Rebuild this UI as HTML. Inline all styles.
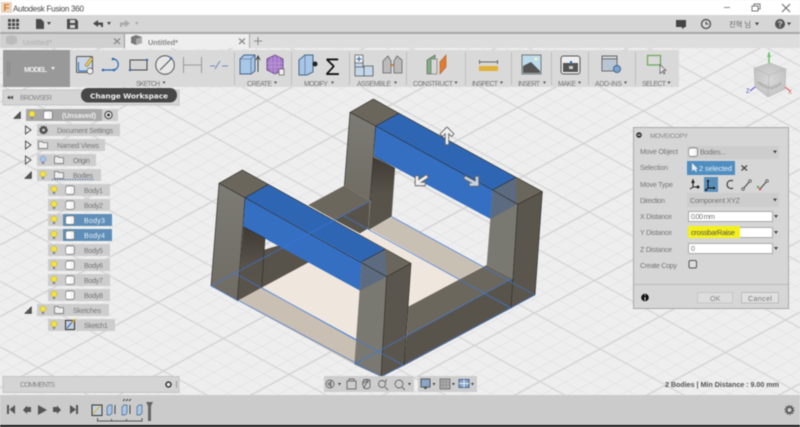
<!DOCTYPE html>
<html><head><meta charset="utf-8"><style>
html,body{margin:0;padding:0;width:800px;height:427px;overflow:hidden;background:#eeeeee}
svg{display:block;position:absolute;left:0;top:0;filter:blur(.4px)}
text{font-family:"Liberation Sans","Noto Sans CJK KR",sans-serif;font-size:7.1px;fill:#777}
.r{fill:#cdcdcd}
.m{fill:#777;font-size:6.9px}
.d{fill:#777;font-size:7.2px}
</style></head><body>
<svg width="800" height="427" viewBox="0 0 800 427" xmlns="http://www.w3.org/2000/svg">
<defs>
<pattern id="grid" width="100" height="100" patternUnits="userSpaceOnUse" patternTransform="matrix(.6 -.325 .655 .36 600 349)">
<path d="M20 0V100M40 0V100M60 0V100M80 0V100M0 20H100M0 40H100M0 60H100M0 80H100" stroke="#e3e3e3" stroke-width="1.200" fill="none"/>
<path d="M0 0H100M0 100H100M0 0V100M100 0V100" stroke="#d4d4d4" stroke-width="2.200" fill="none"/>
</pattern>
<linearGradient id="post" x1="0" x2="0" y1="0" y2="1"><stop offset="0" stop-color="#7c7b75"/><stop offset="1" stop-color="#706c63"/></linearGradient>
<linearGradient id="inner" x1="0" x2="0" y1="0" y2="1"><stop offset="0" stop-color="#3f3b34"/><stop offset=".5" stop-color="#57524a"/><stop offset="1" stop-color="#5a554c"/></linearGradient>
<radialGradient id="cube"><stop offset="0" stop-color="#d8d8d8"/><stop offset="1" stop-color="#c4c4c4"/></radialGradient>
<g id="bulb"><circle cx="0" cy="-1" r="3" fill="#f3e23f" stroke="#b8a93a" stroke-width=".5"/><rect x="-1.200" y="1.800" width="2.400" height="2.200" fill="#888"/></g>
<g id="bulbb"><circle cx="0" cy="-1" r="3" fill="#a9c3ea" stroke="#6d8ab8" stroke-width=".5"/><rect x="-1.200" y="1.800" width="2.400" height="2.200" fill="#888"/></g>
<g id="body"><rect x="-4.200" y="-4.200" width="8.600" height="8.600" rx="2" fill="#f2f2f2" stroke="#777" stroke-width=".8"/><rect x="-4" y="-2.500" width="4.600" height="6" fill="#fff"/></g>
<path id="folder" d="M-4.500 -3.500H-1L0 -2.300H4.500V3.500H-4.500Z" fill="#eee" stroke="#666" stroke-width=".7"/>
<path id="tri" d="M-2.500 -4L3 0L-2.500 4Z" fill="#eee" stroke="#444" stroke-width=".9"/>
<path id="tri2" d="M3.500 -3.500V3.500H-3.500Z" fill="#555" stroke="#333" stroke-width=".5"/>
</defs>

<!-- viewport -->
<rect width="800" height="427" fill="#eeeeee"/>
<rect width="800" height="427" fill="url(#grid)"/>

<!-- model -->
<g transform="translate(200 95) scale(.33333)">
<polygon points="185,578 505,405 575,365 850,515 625,635 620,735 468,735" fill="#efe7dd"/>
<polygon points="115,618 185,578 468,735 463,808" fill="#c9bfb2"/>
<polygon points="510,402 578,366 848,514 778,553" fill="#c9c0b4"/>
<polygon points="325,330 433,272 510,318 405,375" fill="#6c675d"/>
<polygon points="405,375 510,318 505,400 480,415" fill="#58534a"/>
<polygon points="190,465 240,450 330,500 185,578" fill="#57524a"/>
<polygon points="130,395 195,430 185,578 112,618" fill="url(#inner)"/>
<polygon points="520,185 585,220 575,365 505,405" fill="url(#inner)"/>
<polygon points="625,635 860,510 938,550 620,720" fill="#6c675c"/>
<polygon points="620,720 938,550 933,640 612,812" fill="#59544b"/>
<!-- back post -->
<polygon points="450,52 527,93 510,318 433,272" fill="url(#post)"/>
<polygon points="450,52 520,12 597,55 527,93" fill="#6b665c"/>
<polygon points="527,93 597,55 948,247 878,285" fill="#2f66b4"/>
<polygon points="527,93 878,285 872,372 522,183" fill="#346fc2"/>
<polygon points="878,285 953,328 938,550 860,510" fill="#7a7971"/>
<polygon points="953,328 1027,290 1005,600 933,640" fill="#5b564d"/>
<polygon points="878,285 948,247 1027,290 953,328" fill="#6b665c"/>
<polygon points="878,285 948,247 950,328 872,372" fill="#5c6b80"/>
<polyline points="527,93 878,285 953,328 1027,290 948,247 597,55 520,12 450,52 527,93 597,55" fill="none" stroke="#2f2d2a" stroke-width="2"/>
<path d="M878 285L948 247M953 328L933 640M1027 290L1005 600M527 93L510 318M450 52L433 272M522 183L585 220" stroke="#2f2d2a" stroke-width="2" fill="none"/>
<!-- front post -->
<polygon points="57,265 135,308 112,618 33,573" fill="url(#post)"/>
<polygon points="57,265 127,225 205,268 135,308" fill="#6b665c"/>
<polygon points="135,308 205,268 555,463 485,500" fill="#2f66b4"/>
<polygon points="135,308 485,500 480,587 130,395" fill="#346fc2"/>
<polygon points="485,500 560,545 543,845 463,808" fill="#7a7971"/>
<polygon points="560,545 633,505 612,812 543,845" fill="#5b564d"/>
<polygon points="485,500 555,463 633,505 560,545" fill="#6b665c"/>
<polygon points="485,500 555,463 560,545 480,587" fill="#5c6b80"/>
<path d="M57 265L127 225L633 505L560 545L135 308L57 265L33 573M135 308L112 618M205 268L135 308M555 463L485 500M560 545L543 845M633 505L612 812M130 395L195 430M195 430L185 578" stroke="#2f2d2a" stroke-width="2" fill="none"/>
<!-- blue sketch lines -->
<path d="M33 573L545 845L1005 600M33 573L510 318M463 808L938 550M105 535L612 812M575 365L1005 600M430 362L935 640M185 578L468 735" stroke="#3a78e0" stroke-width="2" fill="none"/>
</g>
<!-- manipulators -->
<g fill="none" stroke-linecap="square" stroke-linejoin="miter">
<g stroke="#666" stroke-width="4.400"><path d="M447 143V130M442.500 134L447 129.500L451.500 134"/><path d="M426 177L417 183M417 177.500V184H423.500"/><path d="M466 178L477 184M477 178V184.500H471"/></g>
<g stroke="#f2f2f2" stroke-width="2.600"><path d="M447 143V130M442.500 134L447 129.500L451.500 134"/><path d="M426 177L417 183M417 177.500V184H423.500"/></g>
<g stroke="#c5d3e6" stroke-width="2.600"><path d="M466 178L477 184M477 178V184.500H471"/></g>
</g>

<!-- title bar -->
<rect width="800" height="15" fill="#fff"/>
<rect x="1" y="2" width="11" height="11" fill="#e8d6c4"/>
<text x="3.500" y="11" style="font-size:10px;font-weight:bold;fill:#e07a20">F</text>
<text x="13" y="11.500" textLength="71" style="font-size:8.100px;fill:#444">Autodesk Fusion 360</text>
<path d="M724 7.500H730" stroke="#888"/>
<path d="M752 6H758V11H752ZM754 6V4H760V9H758" fill="none" stroke="#777"/>
<path d="M782 4L790 12M790 4L782 12" stroke="#666"/>

<!-- top toolbar -->
<rect y="15" width="800" height="18" fill="#d6d6d6"/>
<rect y="32" width="800" height="2" fill="#a8a8a8"/>
<g fill="#4a4a4a">
<rect x="8" y="19" width="3" height="3"/><rect x="12" y="19" width="3" height="3"/><rect x="16" y="19" width="3" height="3"/>
<rect x="8" y="23" width="3" height="3"/><rect x="12" y="23" width="3" height="3"/><rect x="16" y="23" width="3" height="3"/>
<rect x="8" y="27" width="3" height="2"/><rect x="12" y="27" width="3" height="2"/><rect x="16" y="27" width="3" height="2"/>
<path d="M36 19H41L44 22V29H36Z"/><path d="M47 22H51L49 25Z"/>
<path d="M67 19H76L78 21V29H67ZM70 20V23H75V20ZM70 25V28H75V25Z" fill-rule="evenodd"/>
<path d="M93 23.500L98 20V22.500H103V27H101V25H98V27Z"/><path d="M107 22H111L109 25Z"/>
</g>
<g fill="#aaa"><path d="M130 23.500L125 20V22.500H120V27H122V25H125V27Z"/><path d="M135 22H138.500L136.800 25Z"/></g>
<rect x="676" y="20" width="10" height="7" fill="#444"/><path d="M682 27V29L685 27Z" fill="#444"/>
<circle cx="706" cy="24" r="4.500" fill="none" stroke="#444" stroke-width="1.200"/><path d="M706 21.500V24H708.500" fill="none" stroke="#444" stroke-width="1"/>
<text x="729" y="27" textLength="22" style="font-size:7.400px;fill:#666">진혁 님</text>
<path d="M755 22.500H759L757 25.500Z" fill="#444"/>
<circle cx="780" cy="24" r="5" fill="#555"/><text x="777.600" y="27.200" style="font-size:8px;font-weight:bold;fill:#ddd">?</text>
<path d="M787 22.500H791L789 25.500Z" fill="#444"/>

<!-- tabs -->
<rect y="34" width="800" height="14" fill="#dddddd"/>
<rect y="34" width="124" height="14" fill="#d0d0d0"/>
<rect x="125" y="34" width="124" height="14" fill="#eeeeee"/>
<rect x="124" y="34" width="1" height="14" fill="#999"/><rect x="249" y="34" width="1" height="14" fill="#aaa"/>
<path d="M6 37L11 35L17 37V43L11 45L6 43Z" fill="#bbb"/>
<path d="M131 37L136 35L142 37V43L136 45L131 43Z" fill="#777"/><path d="M136 39L142 37V43L136 45Z" fill="#aaa"/>
<text x="23" y="45" textLength="29" style="font-size:7.400px;fill:#aaa">Untitled*</text>
<text x="148" y="45" textLength="30" style="font-size:7.400px;font-weight:bold;fill:#888">Untitled*</text>
<path d="M114 38.500L120 44M120 38.500L114 44" stroke="#888" stroke-width="1.200"/>
<path d="M239 38.500L245 44M245 38.500L239 44" stroke="#888" stroke-width="1.200"/>
<path d="M258 37V45M254 41H262" stroke="#888" stroke-width="1"/>

<!-- ribbon -->
<rect x="3" y="50" width="676" height="37" fill="#d9d9d9"/>
<rect x="3" y="50" width="67" height="37" fill="#999"/>
<path d="M7.500 61V76M9.500 61V76" stroke="#888"/>
<text x="24" y="72" textLength="23" style="font-size:7.200px;font-weight:bold;fill:#eee">MODEL</text>
<path d="M51 67H55L53 70Z" fill="#eee"/>
<g stroke="#bdbdbd"><path d="M234.500 52V85M291.500 52V85M349.500 52V85M406.500 52V85M465.500 52V85M511.500 52V85M551.500 52V85M588.500 52V85M635.500 52V85"/></g>
<!-- sketch icons -->
<rect x="76.500" y="56.500" width="16" height="16" rx="1" fill="#cbd6e4" stroke="#555"/><path d="M78.500 71V62M78.500 71H88" stroke="#2f66b4"/><path d="M85 65L91 57L93 59L87 67Z" fill="#f0c84a" stroke="#555" stroke-width=".5"/><circle cx="90" cy="71" r="3" fill="#eee" stroke="#555" stroke-width=".7"/>
<path d="M103 70H113C120 70 120 59 113 59" fill="none" stroke="#2f66b4" stroke-width="1.200"/><g fill="#2f66b4"><circle cx="103" cy="70" r="1.300"/><circle cx="114" cy="70" r="1.300"/><circle cx="113" cy="59" r="1.300"/></g>
<rect x="130" y="60" width="17" height="10" fill="#d4d4d4" stroke="#444" stroke-width="1"/><circle cx="130" cy="70" r="1.200" fill="#2f66b4"/><circle cx="147" cy="60" r="1.200" fill="#2f66b4"/>
<circle cx="165" cy="65" r="9.300" fill="#e6e6e6" stroke="#555" stroke-width="1"/><path d="M160 70L171 59" stroke="#555"/><circle cx="171" cy="58.500" r="1.200" fill="#2f66b4"/>
<path d="M183.500 57V73M201.500 57V73M184 65H201" stroke="#999"/>
<path d="M210 66H215M215 69L220 61M222 66H228" stroke="#6d8ab8" stroke-width="1"/>
<!-- create -->
<path d="M240 59L244 55H255V71L251 74H240Z" fill="#a9c6e6" stroke="#44668c"/><path d="M240 59H251V74M251 59L255 55" stroke="#44668c" stroke-width=".6" fill="none"/><path d="M258 72V57M256 60L258 56L260 60" stroke="#444" fill="none"/>
<path d="M267 59L275 55L283 59V70L275 74L267 70Z" fill="#a57cc8" stroke="#6f4b90"/><path d="M267 63L283 63M267 67L283 67M271 57V72M275 55V74M279 57V72" stroke="#c6a9df" stroke-width=".6"/><rect x="279" y="69" width="5" height="6" fill="#eee" stroke="#444" stroke-width=".6"/>
<!-- modify -->
<path d="M299 60L305 55H313V72L307 75H299Z" fill="#a9c6e6" stroke="#44668c"/><path d="M305 55V75" stroke="#44668c" stroke-width=".6"/><circle cx="315" cy="64" r="2.500" fill="#222"/>
<text x="325" y="75" style="font-size:24px;fill:#111">Σ</text>
<!-- assemble -->
<path d="M355 60H363V67H355ZM364 66H373V76H364ZM355 67H364V76H355Z" fill="#c4d6ea" stroke="#555" stroke-width=".8"/><rect x="355" y="55" width="8" height="8" fill="#eee" stroke="#555" stroke-width=".7"/><path d="M359 56.500V61.500M356.500 59H361.500" stroke="#2f66b4"/>
<path d="M383 73V61L388 56L391 61V73ZM394 73V61L397 56L402 60V73Z" fill="#bbb" stroke="#666" stroke-width=".8"/><path d="M391 65L394 65" stroke="#d07a30" stroke-width="2"/>
<!-- construct -->
<path d="M427 60L435 55V70L431 74H427Z" fill="#7fb07e" stroke="#555" stroke-width=".6"/><rect x="431" y="59" width="6" height="15" fill="#d6d6d6" stroke="#666" stroke-width=".6"/><path d="M440 62L446 55V67L440 74Z" fill="#df7c34" stroke="#b05a20" stroke-width=".6"/>
<!-- inspect -->
<path d="M479.500 60V64M497.500 60V64M480 62H497" stroke="#666"/><rect x="479" y="66" width="19" height="5" fill="#e2b13a"/>
<!-- insert -->
<rect x="522" y="55" width="19" height="19" fill="#bcdcee" stroke="#777"/><path d="M523 73V66L531 62L540 71V73Z" fill="#555"/><circle cx="536" cy="59" r="1.500" fill="#fff3b0"/>
<!-- make -->
<rect x="561" y="56" width="19" height="18" rx="2.500" fill="#eee" stroke="#555"/><rect x="563" y="63" width="15" height="9" fill="#555"/><path d="M569 66H573V69H569Z" fill="#ccc"/><path d="M571 61V64" stroke="#2f66b4" stroke-width="2"/>
<!-- add-ins -->
<rect x="602" y="56" width="15" height="15" fill="#cfd4da" stroke="#666"/><path d="M602 59H617" stroke="#666"/><rect x="603" y="60" width="13" height="10" fill="#b8c5d4"/><circle cx="617" cy="69" r="3.500" fill="#7ba4d4" stroke="#44668c"/>
<!-- select -->
<rect x="647.500" y="55.500" width="13" height="9.500" fill="none" stroke="#6aa855" stroke-width="1.200"/>
<path d="M660 64.500V73.500L662 71.500L664 74L665 73L663 70.500H666Z" fill="#e8e8e8" stroke="#555" stroke-width=".7"/>
<!-- ribbon labels -->
<g>
<text class="m" x="136" y="86" textLength="24">SKETCH</text><path d="M162.500 81.500H165.500L164 84Z" fill="#555"/>
<text class="m" x="247" y="86" textLength="25">CREATE</text><path d="M274 81.500H277L275.500 84Z" fill="#555"/>
<text class="m" x="304" y="86" textLength="24">MODIFY</text><path d="M331 81.500H334L332.500 84Z" fill="#555"/>
<text class="m" x="357" y="86" textLength="34">ASSEMBLE</text><path d="M394 81.500H397L395.500 84Z" fill="#555"/>
<text class="m" x="413" y="86" textLength="40">CONSTRUCT</text><path d="M454.500 81.500H457.500L456 84Z" fill="#555"/>
<text class="m" x="472" y="86" textLength="26">INSPECT</text><path d="M500 81.500H503L501.500 84Z" fill="#555"/>
<text class="m" x="518" y="86" textLength="22">INSERT</text><path d="M543 81.500H546L544.500 84Z" fill="#555"/>
<text class="m" x="558" y="86" textLength="18">MAKE</text><path d="M578 81.500H581L579.500 84Z" fill="#555"/>
<text class="m" x="595" y="86" textLength="27">ADD-INS</text><path d="M624 81.500H627L625.500 84Z" fill="#555"/>
<text class="m" x="642" y="86" textLength="24">SELECT</text><path d="M667.500 81.500H670.500L669 84Z" fill="#555"/>
</g>

<!-- view cube -->
<g>
<path d="M769 52V66" stroke="#6cc46c" stroke-width="1.500"/><path d="M767 57L769 52L771 57Z" fill="#6cc46c"/>
<path d="M754 68L770 63L786 69L785 89L768 97L755 87Z" fill="url(#cube)" stroke="#aaa" stroke-width=".6" stroke-dasharray="2 1"/>
<path d="M754 68L769 75L786 69M769 75L768 97" fill="none" stroke="#b5b5b5" stroke-width=".6"/>
<path d="M755 87L750 91" stroke="#6a6ae0" stroke-width="1.200"/><path d="M785 87L790 91" stroke="#e06a6a" stroke-width="1.200"/>
<text x="746" y="93" style="font-size:6px;fill:#5a5ad8">Z</text>
<text x="788" y="94" style="font-size:6px;fill:#d85a5a">X</text>
<text x="757" y="84" transform="rotate(25 757 84)" style="font-size:4px;fill:#888">FRONT</text>
<text x="771" y="90" transform="rotate(-25 771 90)" style="font-size:4px;fill:#888">RIGHT</text>
</g>

<!-- browser -->
<rect x="3" y="90" width="176" height="15" fill="#d4d4d4" stroke="#c4c4c4"/>
<path d="M7 97.500L10 95.500V99.500ZM10 97.500L13 95.500V99.500Z" fill="#444"/>
<text x="20" y="100" textLength="32" style="font-size:7px;fill:#888">BROWSER</text>
<rect x="81" y="88" width="96" height="14.500" rx="7" fill="#474747"/>
<text x="90" y="98.500" textLength="78" style="font-family:'DejaVu Sans',sans-serif;font-size:7.400px;font-weight:bold;fill:#eee">Change Workspace</text>

<use href="#tri2" x="17" y="115"/>
<rect x="26" y="109" width="92" height="12" class="r"/><rect x="26" y="109" width="76" height="12" fill="#a8a8a8"/>
<use href="#bulb" x="32" y="115"/><use href="#body" x="48" y="115"/>
<text x="62" y="118" textLength="34" style="font-size:7.200px;font-weight:bold;fill:#eee">(Unsaved)</text>
<circle cx="108.500" cy="115" r="3.600" fill="#eee" stroke="#333"/><circle cx="108.500" cy="115" r="1.500" fill="#333"/>

<use href="#tri" x="28" y="130"/>
<rect x="37" y="124" width="83" height="12" class="r"/>
<circle cx="43.500" cy="130" r="3.500" fill="#555" stroke="#444" stroke-width="1.500" stroke-dasharray="1.500 .8"/><circle cx="43.500" cy="130" r="1.300" fill="#ddd"/>
<text x="57" y="133" textLength="56">Document Settings</text>

<use href="#tri" x="28" y="145"/>
<rect x="37" y="139" width="68" height="12" class="r"/><use href="#folder" x="43" y="145"/>
<text x="57" y="148" textLength="42">Named Views</text>

<use href="#tri" x="28" y="160"/>
<rect x="37" y="154" width="59" height="12" class="r"/><use href="#bulbb" x="43" y="160"/><use href="#folder" x="59" y="160"/>
<text x="73" y="163" textLength="17">Origin</text>

<use href="#tri2" x="28" y="175"/>
<rect x="37" y="169" width="64" height="12" class="r"/><use href="#bulb" x="43" y="175"/><use href="#folder" x="59" y="175"/>
<text x="73" y="178" textLength="20">Bodies</text>
<path d="M52 179.500H94" stroke="#5577aa" stroke-width="1" stroke-dasharray="1.500 1"/>

<g>
<rect x="48" y="184" width="62" height="12" class="r"/><use href="#bulb" x="54" y="190"/><use href="#body" x="70" y="190"/><text x="84" y="193" textLength="19">Body1</text>
<rect x="48" y="199" width="62" height="12" class="r"/><use href="#bulb" x="54" y="205"/><use href="#body" x="70" y="205"/><text x="84" y="208" textLength="19">Body2</text>
<rect x="48" y="214" width="15" height="12" class="r"/><rect x="63" y="214" width="49" height="12" fill="#5f8fb8"/><use href="#bulb" x="54" y="220"/><use href="#body" x="70" y="220"/><text x="84" y="223" textLength="21" style="fill:#e8eef4">Body3</text>
<rect x="48" y="229" width="15" height="12" class="r"/><rect x="63" y="229" width="49" height="12" fill="#5f8fb8"/><use href="#bulb" x="54" y="235"/><use href="#body" x="70" y="235"/><text x="84" y="238" textLength="21" style="fill:#e8eef4">Body4</text>
<rect x="48" y="244" width="62" height="12" class="r"/><use href="#bulb" x="54" y="250"/><use href="#body" x="70" y="250"/><text x="84" y="253" textLength="19">Body5</text>
<rect x="48" y="259" width="62" height="12" class="r"/><use href="#bulb" x="54" y="265"/><use href="#body" x="70" y="265"/><text x="84" y="268" textLength="19">Body6</text>
<rect x="48" y="274" width="62" height="12" class="r"/><use href="#bulb" x="54" y="280"/><use href="#body" x="70" y="280"/><text x="84" y="283" textLength="19">Body7</text>
<rect x="48" y="289" width="62" height="12" class="r"/><use href="#bulb" x="54" y="295"/><use href="#body" x="70" y="295"/><text x="84" y="298" textLength="19">Body8</text>
</g>
<use href="#tri2" x="28" y="310"/>
<rect x="37" y="304" width="72" height="12" class="r"/><use href="#bulb" x="43" y="310"/><use href="#folder" x="59" y="310"/>
<text x="73" y="313" textLength="28">Sketches</text>
<rect x="48" y="319" width="67" height="12" class="r"/><use href="#bulb" x="54" y="325"/>
<rect x="65.500" y="320.500" width="9" height="9" fill="#c4d0de" stroke="#333"/><path d="M67 328L73 321" stroke="#2f66b4"/><path d="M72 323L75 319" stroke="#e0b030" stroke-width="1.500"/>
<text x="84" y="328" textLength="24">Sketch1</text>

<!-- comments -->
<rect x="3" y="376.500" width="176" height="16" fill="#d4d4d4" stroke="#c4c4c4"/>
<text x="20" y="387" textLength="35" style="font-size:7px;fill:#888">COMMENTS</text>
<circle cx="168.500" cy="384.500" r="2.500" fill="#eee" stroke="#333" stroke-width="1.500"/>
<path d="M176.500 381V388" stroke="#999"/>

<!-- nav bar -->
<rect x="324" y="376" width="90" height="16" fill="#cdcdcd"/>
<rect x="418" y="376" width="59" height="16" fill="#cdcdcd"/>
<g fill="none" stroke="#666" stroke-width=".9">
<circle cx="330" cy="384" r="4"/><path d="M328 384L331 381.500V386.500Z" fill="#8ab"/>
<rect x="347" y="381" width="9" height="8"/><path d="M349 381V379H354V381"/>
<path d="M364 388C362 384 362 381 364 381V384M364 381V379.500H366V383M366 379.500H368V383M368 380H370V387C369 389 365 389 364 388Z"/>
<circle cx="382" cy="384" r="3.500"/><path d="M385 387L388 390M386 379V382"/>
<circle cx="399" cy="384" r="4"/><path d="M402 387L405 390"/>
</g>
<g fill="#444"><path d="M338 383H341L339.500 385.500ZM408 383H411L409.500 385.500ZM432.500 383H435.500L434 385.500ZM452 383H455L453.500 385.500ZM471 383H474L472.500 385.500Z"/></g>
<rect x="421" y="379" width="9" height="8" fill="#8aa6c8" stroke="#555"/><rect x="424" y="387" width="3" height="2" fill="#555"/>
<rect x="440" y="379" width="10" height="10" fill="#aaa" stroke="#666" stroke-width=".8"/><path d="M440 382H450M440 385H450M443 379V389M446 379V389" stroke="#888" stroke-width=".5"/>
<rect x="459" y="379.500" width="10" height="8" fill="#8aa6c8" stroke="#44668c"/><path d="M464 379.500V387.500M459 383.500H469" stroke="#eee"/>
<text x="665" y="387" textLength="114" style="font-size:7.200px;font-weight:bold;fill:#555">2 Bodies | Min Distance : 9.00 mm</text>

<!-- timeline -->
<rect y="395" width="800" height="30" fill="#cbcbcb"/>
<rect y="425" width="800" height="2" fill="#111"/>
<g fill="#555">
<path d="M7 405H9V414H7ZM9.500 409.500L15 405V414Z"/>
<path d="M23 410L27 405.500V414ZM27 407H31V412H27Z"/>
<path d="M38 405L47 410L38 415Z"/>
<path d="M61 410L57 405.500V414ZM57 407H53V412H57Z"/>
<path d="M70 405L76 409.500L70 414ZM76 405H78V414H76Z"/>
</g>
<rect x="92" y="405" width="10" height="10.500" fill="#c4d0de" stroke="#333"/><path d="M93 414L100 406" stroke="#e0b030"/>
<g><path d="M107 407L109 405H112V413L110 415H107Z" fill="#a9c6e6" stroke="#44668c" stroke-width=".7"/><path d="M115 405V414" stroke="#444"/>
<path d="M122 407L124 405H127V413L125 415H122Z" fill="#a9c6e6" stroke="#44668c" stroke-width=".7"/><path d="M130 405V414" stroke="#444"/>
<path d="M137 407L139 405H142V413L140 415H137Z" fill="#a9c6e6" stroke="#44668c" stroke-width=".7"/></g>
<path d="M123 401L125 399M126 401L128 399M129 401L131 399" stroke="#444"/>
<path d="M146 402H153L151 406V421H148V406Z" fill="#666"/>
<path d="M97.500 418V421H142V418M111.500 419V421M126.500 419V421" fill="none" stroke="#555"/>
<circle cx="789.500" cy="410" r="3" fill="none" stroke="#555" stroke-width="1.800"/><circle cx="789.500" cy="410" r="4.500" fill="none" stroke="#555" stroke-width="1" stroke-dasharray="1.500 1.300"/>

<!-- dialog -->
<rect x="633.500" y="127.500" width="155" height="181" fill="#d6d6d6" stroke="#aaa"/>
<circle cx="639" cy="135" r="2.800" fill="#333"/><path d="M637.500 135H640.500" stroke="#ddd"/>
<text x="650" y="138" textLength="38" style="font-size:6.800px;fill:#888">MOVE/COPY</text>
<g>
<text class="d" x="640" y="154" textLength="38">Move Object</text>
<text class="d" x="640" y="170" textLength="28">Selection</text>
<text class="d" x="640" y="187" textLength="33">Move Type</text>
<text class="d" x="640" y="203" textLength="25">Direction</text>
<text class="d" x="640" y="219" textLength="32">X Distance</text>
<text class="d" x="640" y="235" textLength="32">Y Distance</text>
<text class="d" x="640" y="252" textLength="32">Z Distance</text>
<text class="d" x="640" y="268" textLength="37">Create Copy</text>
</g>
<rect x="687" y="146" width="92" height="13" fill="#cdcdcd"/><use href="#body" x="693" y="152"/>
<text class="d" x="700" y="154.500" textLength="26">Bodies...</text><path d="M773 150.500H777L775 153.500Z" fill="#444"/>
<rect x="687" y="161" width="48" height="14" fill="#4f8ec0"/><path d="M692 163V171L694 169.500L696 172L697 171L695.500 169H698Z" fill="#eee"/>
<text x="699" y="171" textLength="33" style="font-size:7.400px;fill:#eaf2f8">2 selected</text>
<path d="M741.500 165.500L747 170.500M747 165.500L741.500 170.500" stroke="#444" stroke-width="1.200"/>
<g stroke="#222" stroke-width="1" fill="#222">
<path d="M693 179V187H698" fill="none"/><path d="M693 187L690 189"/><circle cx="693" cy="182" r="1"/><circle cx="698" cy="187" r="1"/>
</g>
<rect x="704" y="177" width="14" height="15" fill="#5b8fba"/>
<path d="M708 181V188H714M708 188L706 190" fill="none" stroke="#111"/><circle cx="708" cy="181" r="1.100" fill="#111"/><circle cx="714" cy="188" r="1.100" fill="#111"/><circle cx="706" cy="190" r="1" fill="#111"/>
<path d="M733 181A4 4 0 1 0 733 188" fill="none" stroke="#333" stroke-width="1.100"/>
<path d="M743 189L750 181" stroke="#444"/><circle cx="743" cy="189" r="1.300" fill="#ddd" stroke="#333" stroke-width=".6"/><circle cx="750" cy="181" r="1.300" fill="#ddd" stroke="#333" stroke-width=".6"/>
<path d="M760 189L767 181" stroke="#444"/><circle cx="760" cy="189" r="1.300" fill="#c55"/><circle cx="758" cy="187" r="1.200" fill="#5a5"/><circle cx="767" cy="181" r="1.300" fill="#ddd" stroke="#333" stroke-width=".6"/>
<rect x="687" y="193" width="92" height="14" fill="#cdcdcd"/>
<text class="d" x="690" y="203" textLength="50">Component XYZ</text><path d="M773 198.500H777L775 201.500Z" fill="#444"/>
<rect x="688.500" y="211.500" width="84" height="10" fill="#fff" stroke="#aaa"/>
<text class="d" x="691" y="219" textLength="24">0.00 mm</text>
<rect x="688.500" y="227.500" width="84" height="10" fill="#fff" stroke="#aaa"/>
<rect x="688" y="226" width="52" height="12" fill="#f4f01a"/>
<text x="691" y="235" textLength="44" style="font-size:7.400px;fill:#555">crossbarRaise</text>
<rect x="688.500" y="243.500" width="84" height="10" fill="#fff" stroke="#aaa"/>
<text class="d" x="691" y="251">0</text>
<path d="M774 215H778L776 218ZM774 231H778L776 234ZM774 247H778L776 250Z" fill="#444"/>
<rect x="689" y="260.500" width="7.500" height="7.500" rx="1.500" fill="#ddd" stroke="#555"/>
<path d="M634 284.500H788" stroke="#bbb"/>
<circle cx="645" cy="297.500" r="3.800" fill="#111"/><path d="M645 294.500V295.500M645 297V300.500" stroke="#eee"/>
<rect x="697.500" y="292.500" width="35" height="10.500" fill="#ddd" stroke="#c6c6c6"/>
<text class="d" x="710" y="301" style="fill:#888">OK</text>
<rect x="741.500" y="292.500" width="37" height="10.500" fill="#e0e0e0" stroke="#bbb"/>
<text class="d" x="748" y="301" textLength="24">Cancel</text>
</svg>
</body></html>
